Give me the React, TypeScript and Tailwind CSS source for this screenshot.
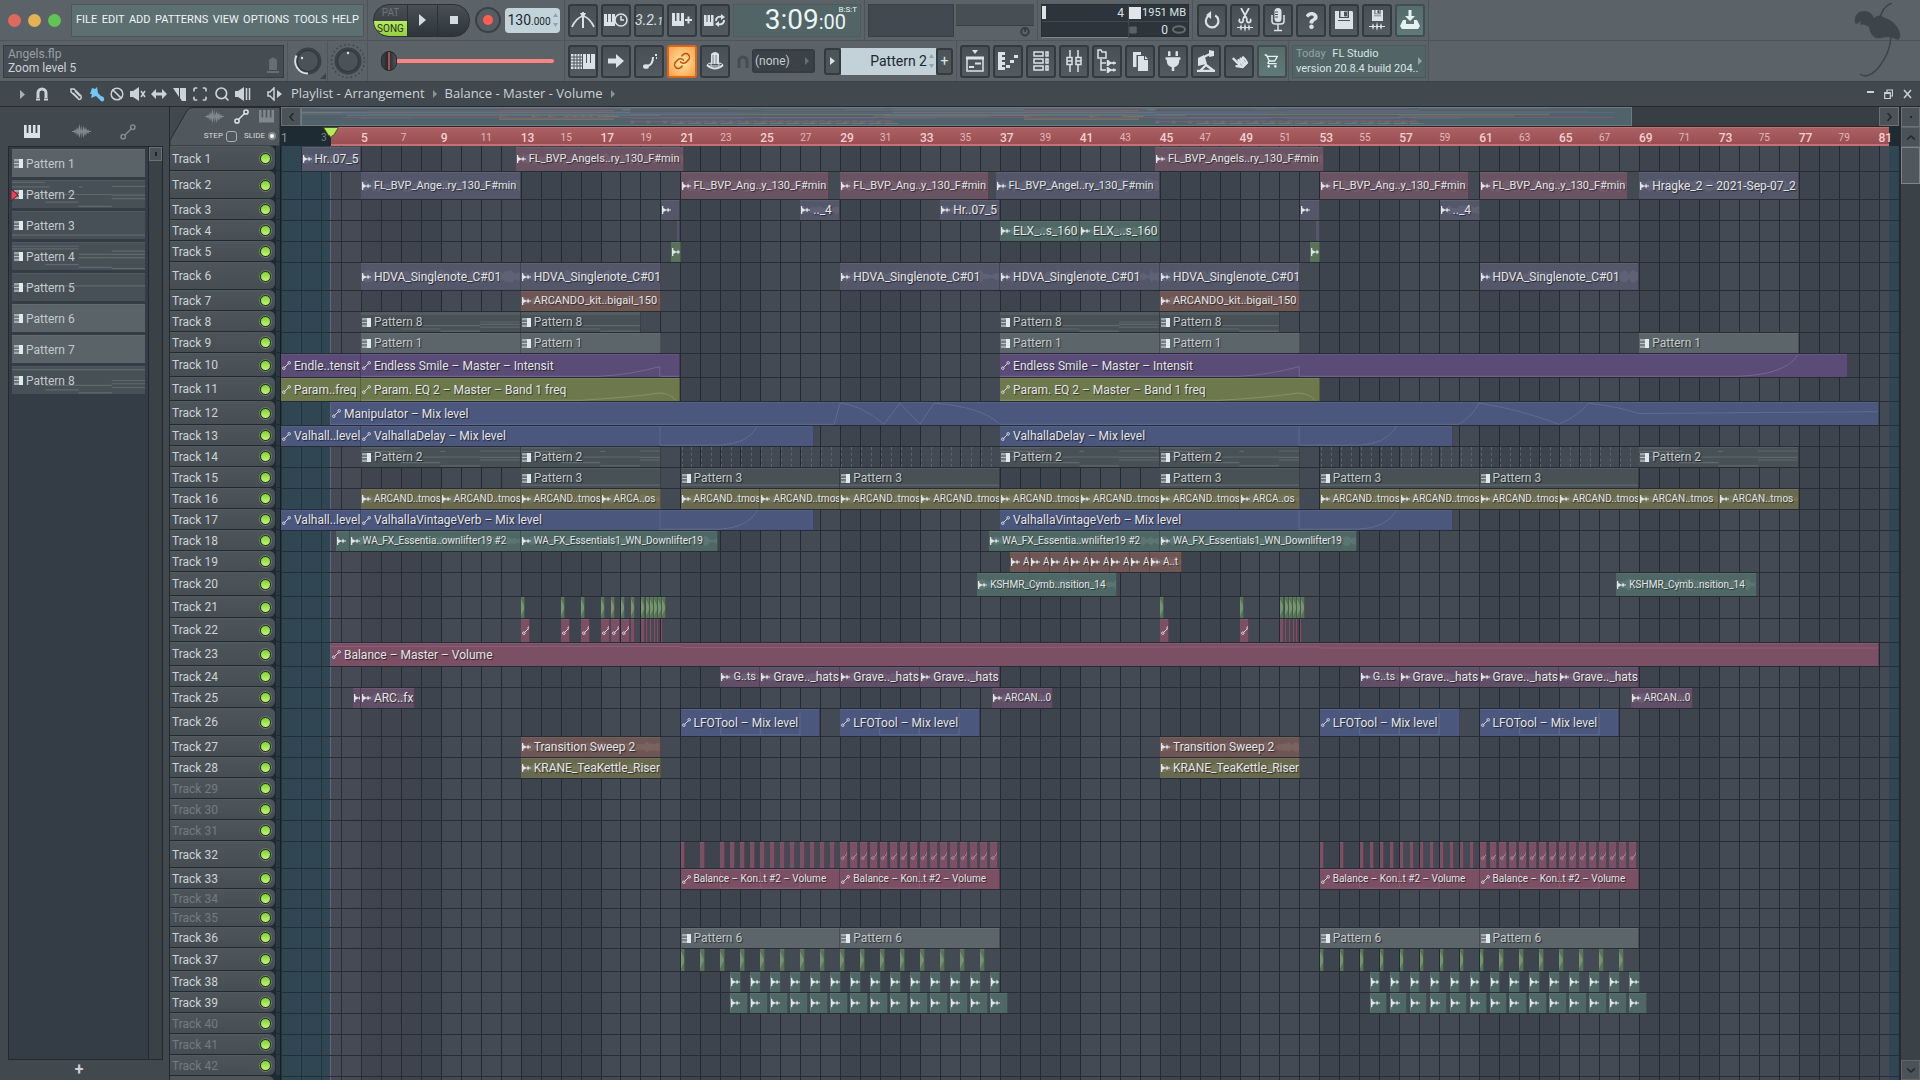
import React from 'react';
import { FaPlug, FaQuestion, FaHandPointer } from 'react-icons/fa';
import { MdOutlineShoppingCart } from 'react-icons/md';
import { Link, Ban, Search, Scan } from 'lucide-react';

type Kind = 'audio' | 'auto' | 'pattern' | 'tick' | 'hit';
type Size = 'sm' | 'xs';
type Tone = keyof typeof tones;

interface Clip {
  at: number;
  end: number;
  name?: string;
  tone: Tone;
  kind: Kind;
  size?: Size;
  curve?: string;
}

interface Track {
  h: number;
  clips: Clip[];
}

// Number of bars that fit in the arrangement view
const BARS = 81;

const tones = {
  slate: { bg: 'bg-[#54576a]', fill: '#6a6d80' },
  mauve: { bg: 'bg-[#6a5363]', fill: '#7c6673' },
  teal: { bg: 'bg-[#4f6866]', fill: '#68827f' },
  green: { bg: 'bg-[#577359]', fill: '#76946f' },
  brown: { bg: 'bg-[#6d5654]', fill: '#866f6c' },
  olive: { bg: 'bg-[#69694f]', fill: '#7f7f64' },
  violet: { bg: 'bg-[#604f66]', fill: '#79677f' },
  purple: { bg: 'bg-[#5a4c77]', fill: '#75678f' },
  lime: { bg: 'bg-[#6d794d]', fill: '#869163' },
  blue: { bg: 'bg-[#4c577d]', fill: '#616b8f' },
  pink: { bg: 'bg-[#7b4f64]', fill: '#8c6174' },
  patDark: { bg: 'bg-[#485156]', fill: '#5d666b' },
  patLight: { bg: 'bg-[#5c656a]', fill: '#5c656a' },
  ghost: { bg: 'bg-transparent', fill: '#5d666b' },
};

const audio = (at: number, end: number, tone: Tone, name?: string, size?: Size): Clip => ({ at, end, name, tone, kind: 'audio', size });
const auto = (at: number, end: number, tone: Tone, name?: string, curve?: string): Clip => ({ at, end, name, tone, kind: 'auto', curve });
const pattern = (at: number, end: number, n: number): Clip => ({
  at,
  end,
  name: `Pattern ${n}`,
  tone: n === 1 || n === 6 ? 'patLight' : 'patDark',
  kind: 'pattern',
});
const hits = (starts: number[], len: number, tone: Tone, kind: Kind): Clip[] => starts.map((s) => ({ at: s, end: s + len, tone, kind }));
const range = (from: number, to: number, step: number) => {
  const out: number[] = [];
  for (let n = from; n <= to + 0.001; n += step) out.push(n);
  return out;
};
// The drop comes back 32 bars later
const twice = (clips: Clip[]): Clip[] => [...clips, ...clips.map((c) => ({ ...c, at: c.at + 32, end: c.end + 32 }))];

const delayCurve = 'M15 0.02 V0.96 H18 Q19.4 0.9 19.9 0.02';
const squares = 'M2 0.96 V0.15 M2 0.96 H4 V0.15 M4 0.96 H6 V0.15';

const tracks: Track[] = [
  { h: 25, clips: [audio(2.03, 5, 'slate', 'Hr..07_5'), ...twice([audio(12.75, 21.2, 'mauve', 'FL_BVP_Angels..ry_130_F#min', 'sm')])] },
  {
    h: 28,
    clips: [
      audio(5, 13, 'slate', 'FL_BVP_Ange..ry_130_F#min', 'sm'),
      ...twice([audio(21, 28.45, 'mauve', 'FL_BVP_Ang..y_130_F#min', 'sm'), audio(29, 36.45, 'mauve', 'FL_BVP_Ang..y_130_F#min', 'sm')]),
      audio(36.77, 45, 'slate', 'FL_BVP_Angel..ry_130_F#min', 'sm'),
      audio(69, 77, 'slate', 'Hragke_2 – 2021-Sep-07_2'),
    ],
  },
  { h: 21, clips: [...twice([audio(20, 21, 'slate'), audio(27, 29, 'slate', '.._4')]), audio(34, 37, 'slate', 'Hr..07_5')] },
  {
    h: 21,
    clips: [...hits([20.8, 52.8], 0.2, 'slate', 'tick'), audio(37, 41, 'teal', 'ELX_..s_160'), audio(41, 45, 'teal', 'ELX_..s_160')],
  },
  { h: 21, clips: twice([audio(20.5, 21, 'green')]) },
  {
    h: 28,
    clips: [
      ...twice([audio(5, 13, 'slate', 'HDVA_Singlenote_C#01'), audio(29, 37, 'slate', 'HDVA_Singlenote_C#01')]),
      ...twice([audio(13, 20, 'slate', 'HDVA_Singlenote_C#01')]),
    ],
  },
  { h: 21, clips: twice([audio(13, 20, 'brown', 'ARCANDO_kit..bigail_150', 'sm')]) },
  { h: 21, clips: twice([pattern(5, 13, 8), pattern(13, 19, 8)]) },
  { h: 21, clips: [...twice([pattern(5, 13, 1), pattern(13, 20, 1)]), pattern(69, 77, 1)] },
  {
    h: 24,
    clips: [
      auto(1, 5, 'purple', 'Endle..tensit'),
      auto(5, 21, 'purple', 'Endless Smile – Master – Intensit', 'M0 0.97 H12 Q13.5 0.9 15 0.55 V0.97 H16'),
      auto(37, 79.45, 'purple', 'Endless Smile – Master – Intensit', 'M0 0.97 H12 Q13.5 0.9 15 0.55 V0.97 H37 Q39.4 0.9 40 0.02'),
    ],
  },
  {
    h: 24,
    clips: [
      auto(1, 5, 'lime', 'Param..freq'),
      ...twice([auto(5, 21, 'lime', 'Param. EQ 2 – Master – Band 1 freq', 'M0 0.97 H11 Q13.5 0.85 15 0.65 Q15.6 0.7 15.8 0.97')]),
    ],
  },
  {
    h: 24,
    clips: [
      auto(
        3.5,
        81,
        'blue',
        'Manipulator – Mix level',
        'M0 0.97 H25.2 L25.5 0.05 Q26.5 0.1 27.700 0.97 L28.5 0.05 L29.5 0.97 L30.2 0.05 Q32.6 0.2 33.5 0.97 H56.5 Q57.2 0.6 57.5 0.05 Q59.5 0.3 61.5 0.97 Q62.5 0.6 63 0.05 Q64.5 0.2 65.5 0.5 L77.5 0.42',
      ),
    ],
  },
  { h: 21, clips: [auto(1, 5, 'blue', 'Valhall..level'), ...twice([auto(5, 27.67, 'blue', 'ValhallaDelay – Mix level', delayCurve)])] },
  {
    h: 21,
    clips: [...twice([pattern(5, 13, 2), pattern(13, 20, 2), ...hits(range(21, 36.5, 0.5), 0.5, 'ghost', 'tick')]), pattern(69, 77, 2)],
  },
  { h: 21, clips: twice([pattern(13, 20, 3), pattern(21, 29, 3), pattern(29, 37, 3)]) },
  {
    h: 21,
    clips: [
      ...twice([
        ...[5, 9, 13, 21, 25, 29, 33].map((b) => audio(b, b + 4, 'olive', 'ARCAND..tmos', 'xs')),
        audio(17, 20, 'olive', 'ARCA..os', 'xs'),
      ]),
      ...[69, 73].map((b) => audio(b, b + 4, 'olive', 'ARCAN..tmos', 'xs')),
    ],
  },
  { h: 21, clips: [auto(1, 5, 'blue', 'Valhall..level'), ...twice([auto(5, 27.67, 'blue', 'ValhallaVintageVerb – Mix level', delayCurve)])] },
  {
    h: 21,
    clips: [
      audio(3.73, 4.43, 'teal'),
      audio(4.43, 13, 'teal', 'WA_FX_Essentia..ownlifter19 #2', 'xs'),
      audio(36.45, 45, 'teal', 'WA_FX_Essentia..wnlifter19 #2', 'xs'),
      ...twice([audio(13, 22.87, 'teal', 'WA_FX_Essentials1_WN_Downlifter19', 'xs')]),
    ],
  },
  { h: 21, clips: [...range(37.5, 43.5, 1).map((b) => audio(b, b + 1, 'brown', 'A', 'xs')), audio(44.5, 46.1, 'brown', 'A..t', 'xs')] },
  { h: 24, clips: twice([audio(35.85, 42.87, 'teal', 'KSHMR_Cymb..nsition_14', 'xs')]) },
  {
    h: 22,
    clips: hits([13, 15, 16, 17, 17.5, 18, 18.5, 19, 19.25, 19.45, 19.65, 19.85, 20.05, 45, 49, 51, 51.25, 51.45, 51.65, 51.85, 52.05], 0.2, 'green', 'tick'),
  },
  {
    h: 24,
    clips: [
      ...[13, 15, 16, 17, 17.5, 18, 45, 49].map((b) => auto(b, b + 0.48, 'pink')),
      ...hits([18.5, 19, 51], 0.22, 'pink', 'tick'),
      ...hits([19.27, 19.45, 19.65, 19.82, 20.02, 51.27, 51.45, 51.65, 51.82, 52.02], 0.1, 'pink', 'tick'),
    ],
  },
  { h: 24, clips: [auto(3.5, 81, 'pink', 'Balance – Master – Volume', 'M0 0.15 H17.5 L17.6 0.2 L49.5 0.17 L49.6 0.22 H77.5')] },
  {
    h: 21,
    clips: twice([audio(23, 25, 'violet', 'G..ts', 'sm'), ...[25, 29, 33].map((b) => audio(b, b + 4, 'violet', 'Grave.._hats'))]),
  },
  { h: 21, clips: [audio(4.6, 5, 'violet'), audio(5, 7.7, 'violet', 'ARC..fx'), ...twice([audio(36.58, 39.67, 'violet', 'ARCAN...0', 'xs')])] },
  { h: 28, clips: twice([21, 29].map((b) => auto(b, b + 7, 'blue', 'LFOTool – Mix level', squares))) },
  { h: 21, clips: twice([audio(13, 20, 'brown', 'Transition Sweep 2')]) },
  { h: 21, clips: twice([audio(13, 20, 'olive', 'KRANE_TeaKettle_Riser')]) },
  { h: 21, clips: [] },
  { h: 21, clips: [] },
  { h: 21, clips: [] },
  {
    h: 27,
    clips: twice([...hits([21, 22, ...range(23, 28.5, 0.5)], 0.24, 'pink', 'tick'), ...range(29, 36.5, 0.5).map((b) => auto(b, b + 0.38, 'pink'))]),
  },
  { h: 21, clips: twice([21, 29].map((b) => ({ ...auto(b, b + 8, 'pink', 'Balance – Kon..t #2 – Volume', squares), size: 'xs' as Size }))) },
  { h: 19, clips: [] },
  { h: 19, clips: [] },
  { h: 21, clips: twice([pattern(21, 29, 6), pattern(29, 37, 6)]) },
  { h: 23, clips: twice(hits(range(21, 36, 1), 0.22, 'green', 'tick')) },
  { h: 21, clips: twice(hits(range(23.5, 36.5, 1), 0.52, 'teal', 'hit')) },
  { h: 21, clips: twice(hits(range(23.5, 36.5, 1), 0.88, 'teal', 'hit')) },
  { h: 21, clips: [] },
  { h: 21, clips: [] },
  { h: 21, clips: [] },
];

// Note lines of the patterns: from, to, height (all as a share of the pattern)
const notes: Record<string, number[][]> = {
  'Pattern 2': [[0, 0.25, 0.05], [0, 0.28, 0.22], [0.5, 0.53, 0.22], [0, 0.75, 0.5], [0.25, 0.5, 0.78], [0.5, 0.75, 0.94], [0.75, 1, 0.2], [0.75, 1, 0.52], [0.75, 1, 0.65]],
  'Pattern 3': [[0, 1, 0.86]],
  'Pattern 4': [[0, 0.5, 0.12], [0, 0.5, 0.22], [0.5, 0.75, 0.42], [0.5, 0.75, 0.54], [0.25, 0.5, 0.8], [0.5, 0.75, 0.9], [0.75, 1, 0.3], [0.75, 1, 0.42], [0.75, 1, 0.54], [0.75, 1, 0.95]],
  'Pattern 5': [[0, 1, 0.44]],
  'Pattern 8': [[0, 1, 0.1], [0.25, 0.5, 0.85], [0.25, 0.75, 0.68], [0.5, 0.75, 0.96], [0.75, 1, 0.5], [0.75, 1, 0.62], [0.75, 1, 0.76]],
};

const NoteLines = ({ name, bars }: { name: string; bars: number }) => (
  <svg className="absolute inset-0 h-full w-full" viewBox={`0 0 ${bars} 1`} preserveAspectRatio="none">
    {(notes[name] || []).map(([a, b, y], i) => (
      <path key={i} d={`M${a * 8} ${y}H${b * 8}`} stroke="#5f686d" strokeWidth="1.2" vectorEffect="non-scaling-stroke" />
    ))}
  </svg>
);

const wave = (seed: number, n: number) => {
  let top = 'M0 10';
  let low = '';
  for (let i = 0; i <= n; i++) {
    const r = Math.abs(Math.sin(seed * 12.9 + i * 78.233) * 43758.5453) % 1;
    const amp = 1 + r * 4;
    top += `L${i} ${(10 - amp).toFixed(1)}`;
    low = `L${i} ${(10 + amp).toFixed(1)}` + low;
  }
  return top + low + 'Z';
};

const AudioGlyph = () => (
  <svg className="w-[9px] shrink-0" viewBox="0 0 9 8" fill="currentColor">
    <path d="M0 0h1.300v2L4 3.500h1.200L6 1.500L7 3.400H9v1.200H7L6 6.500L5.200 4.500H4L1.300 6v2H0z" />
  </svg>
);

const AutoGlyph = ({ className = 'w-[9px]' }: { className?: string }) => (
  <svg className={`${className} shrink-0`} viewBox="0 0 10 10" fill="none" stroke="currentColor">
    <circle cx="2" cy="8" r="1.400" />
    <circle cx="8" cy="2" r="1.400" />
    <path d="M3 7L7 3" />
  </svg>
);

const PatternGlyph = () => (
  <svg className="w-[9px] shrink-0" viewBox="0 0 9 9">
    <path d="M0 1h5M0 4.500h5M0 8h5" stroke="#b9c2c6" strokeWidth="1.4" />
    <path d="M0 2.700h5M0 6.300h5" stroke="#7d868b" />
    <path d="M5 0h4v9H5z" fill="#e3eaec" />
  </svg>
);

const labelSize = { sm: 'text-[11px]', xs: 'text-[10px]' };

const ClipView = ({ clip, seed }: { clip: Clip; seed: number }) => {
  const bars = clip.end - clip.at;
  const tone = tones[clip.tone];
  return (
    <div
      className={`absolute inset-y-0 flex items-center gap-[3px] overflow-hidden pl-px text-[#e2e5e8] ${tone.bg} ${clip.tone === 'ghost' ? '' : 'border-r border-black/20 shadow-[inset_0_1px_0_rgba(255,255,255,0.06)]'}`}
      style={{ left: `${((clip.at - 1) / BARS) * 100}%`, width: `${(bars / BARS) * 100}%` }}
    >
      {clip.kind === 'audio' && bars > 1 && (
        <svg className="absolute inset-0 h-full w-full opacity-50" viewBox={`0 0 ${Math.round(bars * 8)} 20`} preserveAspectRatio="none">
          <path d={wave(seed, Math.round(bars * 8))} fill={tone.fill} />
        </svg>
      )}
      {clip.kind === 'pattern' && <NoteLines name={clip.name || ''} bars={bars} />}
      {clip.curve && (
        <svg className="absolute inset-0 h-full w-full" viewBox={`0 0 ${bars} 1`} preserveAspectRatio="none" fill="none" stroke={tone.fill}>
          <path d={clip.curve} vectorEffect="non-scaling-stroke" />
        </svg>
      )}
      {clip.tone === 'ghost' && <span className="h-full border-l border-dashed border-[#5c6568]" />}
      {((clip.kind === 'tick' && clip.tone === 'green') || clip.kind === 'hit') && (
        <svg className="absolute inset-y-0 left-0 h-full w-1" viewBox="0 0 4 20" preserveAspectRatio="none">
          <path d="M0 2L4 10L0 18Z" fill={tone.fill} />
        </svg>
      )}
      {(clip.kind === 'audio' || clip.kind === 'hit') && <span className="relative flex"><AudioGlyph /></span>}
      {clip.kind === 'auto' && <span className={`relative flex ${bars < 0.4 ? 'opacity-50' : ''}`}><AutoGlyph /></span>}
      {clip.kind === 'pattern' && <span className="relative flex"><PatternGlyph /></span>}
      {clip.name && (
        <span
          className={`relative leading-4 whitespace-nowrap [text-shadow:1px_1px_1px_rgba(0,0,0,0.6)] ${clip.kind === 'pattern' ? 'text-[#c3cace]' : ''} ${clip.size ? labelSize[clip.size] : 'text-xs'}`}
        >
          {clip.name}
        </span>
      )}
    </div>
  );
};

/* ---------- toolbar ---------- */

const Keys = ({ className = 'w-[18px]' }: { className?: string }) => (
  <svg className={className} viewBox="0 0 18 15" fill="currentColor">
    <path d="M0 0h3v9h2V0h3v9h2V0h3v9h2V0h3v15H0z" />
  </svg>
);

const WaveIcon = () => (
  <svg className="w-[19px]" viewBox="0 0 19 15" fill="currentColor">
    <path d="M0 7h2l1-2 1 2 1-4 1 3 1.500-6L9 7l.5-7 .5 7 1.500-5L13 6l1-3 1 4 1-2 1 2h2v1h-2l-1 2-1-2-1 4-1-3-1.500 5L10 8l-.5 7L9 8l-1.500 6L6 9l-1 3-1-4-1 2-1-2H0z" />
  </svg>
);

const ToolButton = ({ label, tone = 'dark', children }: { label: string; tone?: 'dark' | 'hot' | 'teal'; children: React.ReactNode }) => {
  const look = {
    dark: 'border-[#343b40] bg-linear-to-b from-[#485055] to-[#535b60] text-[#dbe3e6]',
    hot: 'border-[#d9671d] bg-[radial-gradient(#ffe9a8,#ff9e45)] text-[#c4530f]',
    teal: 'border-[#3d504f] bg-linear-to-b from-[#566c6a] to-[#62797a] text-[#e6f2f2]',
  }[tone];
  return (
    <button aria-label={label} className={`flex h-[33px] w-[30px] shrink-0 items-center justify-center rounded-[3px] border-2 ${look}`}>
      {children}
    </button>
  );
};

const Section = ({ className, children }: { className: string; children?: React.ReactNode }) => (
  <div className={`flex h-full shrink-0 items-center border-r border-[#4e555b] ${className}`}>{children}</div>
);

const Ic = ({ d, fill, w = 'w-5', box = '0 0 20 20', sw = 1.5 }: { d?: string; fill?: string; w?: string; box?: string; sw?: number }) => (
  <svg className={`${w} shrink-0`} viewBox={box}>
    {d && <path d={d} fill="none" stroke="currentColor" strokeWidth={sw} />}
    {fill && <path d={fill} fill="currentColor" />}
  </svg>
);

const FloppyIcon = ({ className }: { className: string }) => (
  <svg className={className} viewBox="0 0 18 18">
    <path d="M0 0h4v7h10V0h3l1 1v17H0z" fill="currentColor" />
    <path d="M5.500 0h7v6h-7z" fill="currentColor" />
    <path d="M9.500 1h2v4h-2zM3 9.500h12" fill="#4d5559" stroke="#4d5559" />
  </svg>
);

const Spinner = () => (
  <svg className="w-[5px] shrink-0" viewBox="0 0 5 14" fill="#93a3aa"><path d="M0 4L2.500 0L5 4zM0 10L2.500 14L5 10z" /></svg>
);

const TopRow = () => (
  <div className="flex h-[41px] items-center border-b border-[#4e555b]">
    <Section className="w-[368px] pr-[3px] pl-2">
      <div className="flex gap-[7px]">
        <button aria-label="Close" className="size-[13px] rounded-full bg-[#e0695f]" />
        <button aria-label="Minimize" className="size-[13px] rounded-full bg-[#e5b252]" />
        <button aria-label="Maximize" className="size-[13px] rounded-full bg-[#62c454]" />
      </div>
      <nav className="ml-[10px] flex h-[33px] flex-1 items-center justify-between border border-[#49595b] bg-[#5d6f71] px-1 text-[11px] text-[#eef5f5]">
        {['FILE', 'EDIT', 'ADD', 'PATTERNS', 'VIEW', 'OPTIONS', 'TOOLS', 'HELP'].map((m) => (
          <button key={m}>{m}</button>
        ))}
      </nav>
    </Section>
    <Section className="w-[197px] pl-[5px]">
      <div className="flex h-[33px] w-[97px] overflow-hidden rounded-2xl border border-[#2b3136] bg-linear-to-b from-[#485056] to-[#2e353a]">
        <div className="flex w-[33px] flex-col text-center text-[10px] leading-4">
          <button className="h-4 text-[#6d757a]">PAT</button>
          <button className="h-4 bg-linear-to-b from-[#b8ec62] to-[#93cc3e] text-[#24330f]">SONG</button>
        </div>
        <button aria-label="Play" className="flex w-[31px] items-center justify-center border-x border-[#2b3136] text-[#d5dcdf]">
          <svg className="w-[7px]" viewBox="0 0 7 12"><path d="M0 0L7 6L0 12z" fill="currentColor" /></svg>
        </button>
        <button aria-label="Stop" className="flex flex-1 items-center justify-center"><span className="size-2 bg-[#d5dcdf]" /></button>
      </div>
      <button aria-label="Record" className="ml-[5px] flex size-[26px] items-center justify-center rounded-full border-2 border-[#3a4146] bg-[#555c62]">
        <span className="size-[10px] rounded-full bg-[#ff5d52]" />
      </button>
      <div className="ml-1 flex h-[25px] w-[55px] items-center justify-center gap-[2px] rounded-sm bg-[#c3d3da] text-[#20282c]">
        <span className="text-sm">130<span className="text-[10px]">.000</span></span>
        <Spinner />
      </div>
    </Section>
    <Section className="w-[300px] gap-[3px] px-[3px]">
      <ToolButton label="Metronome"><Ic w="w-6" box="0 0 24 20" sw={1.8} d="M1 17Q5 8 12 6Q19 8 23 17M12 2V18" fill="M9 3h6l-3 6zM11 9h2v9h-2z" /></ToolButton>
      <ToolButton label="Wait for input">
        <svg className="w-6 shrink-0" viewBox="0 0 24 16"><path d="M0 2h3v8h1V2h3v8h1V2h3v12H0z" fill="currentColor" /><circle cx="17" cy="8" r="6" fill="#4d5559" stroke="currentColor" strokeWidth="1.5" /><path d="M17 4v4h3" fill="none" stroke="currentColor" strokeWidth="1.5" /></svg>
      </ToolButton>
      <ToolButton label="Countdown"><i className="text-sm">3.2.<span className="text-[10px]">1</span></i></ToolButton>
      <ToolButton label="Overdub"><Ic w="w-[20px]" box="0 0 20 14" fill="M0 0h3v8h1.500V0h3v8H9V0h3v13H0zM13 6h2.500V3.500h2V6H20v2h-2.500v2.500h-2V8H13z" /></ToolButton>
      <ToolButton label="Loop record">
        <svg className="w-[22px] shrink-0" viewBox="0 0 22 15"><path d="M0 2h2.500v7h1V2h2.500v7h1V2h2.500v11H0z" fill="currentColor" /><path d="M12 8a4 4 0 0 1 6.500-3.500M20 7a4 4 0 0 1-6.500 3.500" fill="none" stroke="currentColor" strokeWidth="1.800" /><path d="M17 1l4 3-4 3zM15 8v6l-4-3z" fill="currentColor" /></svg>
      </ToolButton>
      <div className="relative flex h-[33px] flex-1 items-center justify-end border border-[#4a5c5d] bg-[#526465] pr-[14px] text-[28px] text-[#e8f6f6]">
        <span>3:09<span className="text-xl">:00</span></span>
        <span className="absolute top-px right-[3px] text-[8px] leading-2">B:S:T</span>
      </div>
    </Section>
    <Section className="w-[173px] gap-[2px] px-[3px]">
      <div className="h-[33px] w-[86px] border border-[#3a4146] bg-[#424950]" />
      <div className="flex h-[33px] flex-1 flex-col">
        <div className="h-6 border-b border-[#3a4146] bg-[#474e54]" />
        <svg className="mt-px mr-1 w-[10px] self-end" viewBox="0 0 10 10"><circle cx="5" cy="5" r="4" fill="none" stroke="#363d42" strokeWidth="2" /><path d="M5 1v4" stroke="#363d42" strokeWidth="2" /></svg>
      </div>
    </Section>
    <Section className="w-[155px] px-[3px]">
      <div className="grid h-[33px] flex-1 grid-cols-[86px_1fr] border border-[#262d33] bg-[#2d343b] text-xs leading-4 text-[#dbe3e6]">
        <div className="flex items-center justify-between border-b border-[#414950]"><span className="h-[13px] w-1 bg-[#dbe3e6]" /><span className="pr-1">4</span></div>
        <div className="flex items-center justify-between border-b border-l border-[#414950] pr-[2px]"><span className="size-3 bg-[#dfe6e9]" /><span className="text-[11px] whitespace-nowrap">1951 MB</span></div>
        <div className="border-b border-[#7d868b]" />
        <div className="flex items-center justify-end gap-1 border-l border-[#414950] pr-[2px]">
          <svg className="mr-auto w-2" viewBox="0 0 8 8"><path d="M1 1h6v6H1zM0 2h8M0 4h8M0 6h8" fill="#5a6268" stroke="#5a6268" /></svg>
          <span>0</span>
          <svg className="w-[14px]" viewBox="0 0 14 9"><ellipse cx="7" cy="4.500" rx="6" ry="3.200" fill="none" stroke="#646c72" strokeWidth="2" /></svg>
        </div>
      </div>
    </Section>
    <Section className="w-[236px] gap-[3px] pl-1">
      <ToolButton label="Undo"><Ic w="w-[18px]" sw={2.4} d="M6 5.500A7 7 0 1 0 13.500 5" fill="M9 0v9L3.500 4.500z" /></ToolButton>
      <ToolButton label="Cut"><Ic w="w-4" box="0 0 16 24" sw={1.8} d="M4 0l6 11M12 0L6 11M5.500 11a2 2 0 1 1-2.500 0M10.500 11a2 2 0 1 0 2.500 0" fill="M0 19h3l1-3 1 3h2l1-4 1 4h2l1-3 1 3h3v1h-3l-1 3-1-3H9l-1 4-1-4H5l-1 3-1-3H0z" /></ToolButton>
      <ToolButton label="Record audio"><svg className="w-4" viewBox="0 0 16 24"><rect x="4.500" y="0" width="7" height="14" rx="3.500" fill="currentColor" /><path d="M2 7v6a3 3 0 0 0 3 3h6a3 3 0 0 0 3-3V7M8 16v6M4 22.500h8" fill="none" stroke="currentColor" strokeWidth="1.500" /><path d="M5 4h3M5 6.500h3M5 9h3" stroke="#4d5559" /></svg></ToolButton>
      <ToolButton label="Help"><FaQuestion size={17} /></ToolButton>
      <ToolButton label="Save"><FloppyIcon className="w-[18px]" /></ToolButton>
      <ToolButton label="Render">
        <span className="flex flex-col items-center gap-px">
          <FloppyIcon className="w-[11px]" />
          <Ic w="w-4" box="0 0 16 9" fill="M0 4h3l1-3 1 3h2l1-4 1 4h2l1-3 1 3h3v1h-3l-1 3-1-3H9l-1 4-1-4H5l-1 3-1-3H0z" />
        </span>
      </ToolButton>
      <ToolButton label="Download" tone="teal"><svg className="w-5" viewBox="0 0 20 20" fill="currentColor"><path d="M8.500 0h3v6H15l-5 5-5-5h3.500zM3 10h3v4h8v-4h3l3 6-2 3H2l-2-3z" /></svg></ToolButton>
    </Section>
  </div>
);

const Knob = ({ dotted }: { dotted?: boolean }) => (
  <svg className="w-9" viewBox="0 0 36 36" role="img">
    {dotted && <circle cx="18" cy="18" r="16.500" fill="none" stroke="#3c4348" strokeWidth="1.500" strokeDasharray="1.500 2.820" />}
    <circle cx="18" cy="18" r="13.500" fill="#3b4247" />
    {!dotted && <path d="M6.500 12.500A12.500 12.500 0 0 0 18 30.500" fill="none" stroke="#d3e0e4" strokeWidth="2" />}
    <circle cx="18" cy="18" r="10.500" fill="#4b5358" stroke="#2f363b" />
    <circle cx={dotted ? 18 : 12} cy={dotted ? 10 : 15} r="1.200" fill="#dbe3e6" />
    {!dotted && <path d="M36 30v6h-6z" fill="#3c4348" />}
  </svg>
);

const BottomRow = () => (
  <div className="flex h-[41px] items-center border-b border-[#3b4247]">
    <Section className="w-[288px] px-[3px]">
      <div className="flex h-[33px] flex-1 items-center justify-between border border-[#363d42] bg-[#454c52] px-1 text-xs">
        <div className="leading-[14px]">
          <p className="text-[#98a1a5]">Angels.flp</p>
          <p className="text-[#cbd3d6]">Zoom level 5</p>
        </div>
        <svg className="mb-[3px] w-3 self-end" viewBox="0 0 12 17" fill="#666e73"><path d="M2 3q4-5 8 0v10H2zM0 14h12v2H0z" /></svg>
      </div>
    </Section>
    <Section className="w-10 justify-center"><Knob /></Section>
    <Section className="w-10 justify-center"><Knob dotted /></Section>
    <Section className="w-[197px] pr-[10px] pl-[13px]">
      <input
        type="range"
        aria-label="Song position"
        defaultValue={0}
        className="h-1 w-full appearance-none rounded-sm bg-[#ff8383] [&::-webkit-slider-thumb]:h-5 [&::-webkit-slider-thumb]:w-4 [&::-webkit-slider-thumb]:appearance-none [&::-webkit-slider-thumb]:rounded-full [&::-webkit-slider-thumb]:border [&::-webkit-slider-thumb]:border-[#23292d] [&::-webkit-slider-thumb]:bg-[linear-gradient(90deg,#3c4348,#23292d_45%,#a8534c_45%,#a8534c_55%,#2a3034_55%,#4d5559)]"
      />
    </Section>
    <Section className="w-[392px] gap-[3px] pl-[3px]">
      <ToolButton label="Typing keyboard"><svg className="w-6 shrink-0" viewBox="0 0 24 15"><path d="M0 0h11v15H0z" fill="currentColor" /><path d="M3 0v15M6 0v15M9 0v15M0 3h11M0 6h11M0 9h11M0 12h11" stroke="#4d5559" /><path d="M12 0h3v9h1V0h3v9h1V0h4v15H12z" fill="currentColor" /></svg></ToolButton>
      <ToolButton label="Step"><Ic w="w-4" box="0 0 16 14" fill="M0 4.500h8V0l8 7-8 7V9.500H0z" /></ToolButton>
      <ToolButton label="Slide notes"><Ic w="w-5" d="M8 15Q14 14 14 6M16 4h2M17 7h1" fill="M4 15.500a3 2.300 0 1 1 6 0a3 2.300 0 1 1-6 0z" sw={2} /></ToolButton>
      <ToolButton label="Link" tone="hot"><Link size={18} /></ToolButton>
      <ToolButton label="Hints"><svg className="w-[18px]" viewBox="0 0 18 20"><path d="M5 3q4-4 8 0v10H5z" fill="currentColor" /><path d="M7 4v9M10 4v9" stroke="#7b8489" /><path d="M1 14q8 7 16 0" fill="none" stroke="currentColor" strokeWidth="2" /><path d="M1 14q1-2 4-2v3h8v-3q3 0 4 2" fill="none" stroke="currentColor" /></svg></ToolButton>
      <svg className="ml-1 w-3 shrink-0" viewBox="0 0 12 13"><path d="M2 13V6a4 4 0 0 1 8 0v7" fill="none" stroke="#454c52" strokeWidth="3" /></svg>
      <label className="relative flex h-6 w-[63px] shrink-0 items-center rounded-[3px] border-2 border-[#363d42] bg-[#3b4247] text-xs text-[#c3cace]">
        <select aria-label="Snap" className="h-full w-full appearance-none pl-px">
          <option>(none)</option>
        </select>
        <svg className="absolute right-1 w-1" viewBox="0 0 4 8"><path d="M0 0L4 4L0 8z" fill="#666e73" /></svg>
      </label>
      <div className="ml-[6px] flex h-[27px] items-stretch">
        <button aria-label="Pattern menu" className="flex w-[17px] items-center justify-center rounded-[3px] border-2 border-[#343b40] bg-[#4d5559]"><svg className="w-[5px]" viewBox="0 0 5 8"><path d="M0 0L5 4L0 8z" fill="#dbe3e6" /></svg></button>
        <button className="flex w-[95px] items-center justify-end gap-[2px] bg-[#c3d1d8] pr-[2px] text-sm text-[#20282c]">Pattern 2 <Spinner /></button>
        <button aria-label="Add pattern" className="flex w-[17px] items-center justify-center rounded-[3px] border-2 border-[#343b40] bg-[#4d5559] text-sm text-[#dbe3e6]">+</button>
      </div>
    </Section>
    <Section className="w-[332px] gap-[3px] pl-[3px]">
      <ToolButton label="Playlist"><svg className="w-[18px]" viewBox="0 0 18 22"><path d="M6 0h6L9 4z" fill="currentColor" /><path d="M1 8h16v13H1z" fill="none" stroke="currentColor" strokeWidth="1.500" /><path d="M0 6.500h18v3H0zM3 16h5v2H3zM9 12.500h6v2H9z" fill="currentColor" /></svg></ToolButton>
      <ToolButton label="Piano roll"><svg className="w-5" viewBox="0 0 20 18" fill="currentColor"><path d="M0 0h7v3H4v2h3v3H4v2h3v3H4v2h3v3H0zM8 13h4v3H8zM12 8h4v3h-4zM16 3h4v3h-4z" /></svg></ToolButton>
      <ToolButton label="Channel rack"><Ic w="w-4" box="0 0 16 20" d="M1 1h9v4H1zM1 8h9v4H1zM1 15h9v4H1zM13 1h2v4h-2zM13 8h2v4h-2zM13 15h2v4h-2z" /></ToolButton>
      <ToolButton label="Mixer"><Ic w="w-4" box="0 0 16 22" d="M4 0v7M4 15v7M12 0v7M12 15v7M1 7.500h5v7H1zM10 7.500h5v7h-5zM1 11h5M10 11h5" /></ToolButton>
      <ToolButton label="Browser"><Ic w="w-5" box="0 0 20 24" d="M1 1h3l1 2h4v6H1zM4 10v11h5M4 14h5M10.500 11v6M10.500 18v6M10 14h9M10 21h9" fill="M11 11l4 3-4 3zM11 18l4 3-4 3zM15 14l2-2 1 2-1 2zM15 21l2-2 1 2-1 2z" /></ToolButton>
      <ToolButton label="Plugin picker"><Ic w="w-[15px]" box="0 0 15 19" fill="M0 0h8v3H3.500v12H0zM5 4h6v4h4v11H5zM12 4l3 3h-3z" /></ToolButton>
      <ToolButton label="Plugins"><FaPlug size={20} /></ToolButton>
      <ToolButton label="Tempo tapper"><Ic w="w-5" box="0 0 20 22" sw={2.4} d="M5 9Q9 6 14 4M8 8l2 7-6 6M10 15l8 6M1 21h18" fill="M2 8l6-3 2 9-8 2zM13 0l5 1v5l-5 1z" /></ToolButton>
      <ToolButton label="Touch controller"><FaHandPointer size={15} className="-rotate-45" /></ToolButton>
      <ToolButton label="Shop" tone="teal"><MdOutlineShoppingCart size={16} /></ToolButton>
    </Section>
    <Section className="w-[140px] px-[3px]">
      <a href="#news" className="flex h-[33px] flex-1 items-center justify-between border border-[#475a5b] bg-[#526465] px-[3px] text-[11px] leading-[15px] whitespace-nowrap text-[#d9e6e6]">
        <span>
          <span className="mr-1 text-[#93a5a5]">Today</span> FL Studio
          <br />
          version 20.8.4 build 204..
        </span>
        <svg className="w-1" viewBox="0 0 4 8"><path d="M0 0L4 4L0 8z" fill="#93a5a5" /></svg>
      </a>
    </Section>
  </div>
);

const FruitLogo = () => (
  <svg className="absolute top-[3px] right-[18px] w-12" viewBox="0 0 48 74">
    <path d="M1 20Q-1 9 10 8Q17 8 20 15Q25 10 31 15Q42 18 46 30Q47 35 44 37Q36 32 27 35Q17 37 15 24Q10 20 6 22L7 18L3 21z" fill="#3d444a" />
    <path d="M26 15Q29 3 38 0M37 34Q36 50 25 64Q14 77 6 71" fill="none" stroke="#3d444a" strokeWidth="1.500" />
  </svg>
);

/* ---------- playlist window ---------- */

const Arrow = () => <svg className="mx-2 w-1" viewBox="0 0 4 8"><path d="M0 0L4 4L0 8z" fill="#8a9398" /></svg>;

const TitleBar = () => (
  <div className="flex h-[25px] items-center border-b border-[#23292e] bg-[#41484e] pr-2 pl-5 text-[#cbd3d6]">
    <button aria-label="Playlist menu"><svg className="w-[5px]" viewBox="0 0 5 9"><path d="M0 0L5 4.500L0 9z" fill="#a8b1b5" /></svg></button>
    <button aria-label="Snap to grid" className="ml-[10px]"><svg className="w-[14px]" viewBox="0 0 14 14"><path d="M3 11V6a4 4 0 0 1 8 0v5" fill="none" stroke="currentColor" strokeWidth="3" /><path d="M1 11.500h4v2H1zM9 11.500h4v2H9z" fill="currentColor" /></svg></button>
    <div className="ml-5 flex w-[182px] items-center justify-between">
      <button aria-label="Draw"><Ic w="w-[14px]" box="0 0 14 14" d="M2 5V2h3l7 7q1 3-2 3.500zM4 6l5 5M6 4l5 5" /></button>
      <button aria-label="Paint" className="text-[#74c7f2]"><svg className="w-4" viewBox="0 0 16 16" fill="currentColor"><path d="M1 8l2-6 3 1 2-2 1 6 3 3q4 1 3 4t-4 0l-4-4-5 2 1-4z" /></svg></button>
      <button aria-label="Delete"><Ban size={14} strokeWidth={2.5} /></button>
      <button aria-label="Mute"><Ic w="w-4" box="0 0 16 14" d="M11 4l4 6M15 4l-4 6" fill="M0 4h3l6-4v14l-6-4H0z" /></button>
      <button aria-label="Slip"><svg className="w-4" viewBox="0 0 16 10" fill="currentColor"><path d="M0 5l5-5v3.500h6V0l5 5-5 5V6.500H5V10z" /></svg></button>
      <button aria-label="Slice"><svg className="w-[14px]" viewBox="0 0 14 14" fill="currentColor"><path d="M0 1h6v9zM7 1h6v13H9L7 11z" /></svg></button>
      <button aria-label="Select"><Scan size={16} strokeWidth={2.5} /></button>
      <button aria-label="Zoom"><Search size={16} strokeWidth={2.5} /></button>
      <button aria-label="Playback"><Ic w="w-4" box="0 0 16 14" d="M11.500 1v12M14.500 1v12" fill="M0 4h3l6-4v14l-6-4H0z" /></button>
    </div>
    <svg className="mr-[9px] ml-4 w-[15px]" viewBox="0 0 15 14"><path d="M1 5h2l4-4v12L3 9H1z" fill="none" stroke="#cbd3d6" strokeWidth="1.500" /><path d="M10 3l5 4-5 4z" fill="#cbd3d6" /></svg>
    <h1 className="flex items-center font-['Open_Sans',sans-serif] text-[13px]">
      Playlist - Arrangement <Arrow /> Balance - Master - Volume <Arrow />
    </h1>
    <div className="ml-auto flex items-center gap-[10px]">
      <button aria-label="Minimize window"><svg className="w-[7px]" viewBox="0 0 7 8"><path d="M0 1h7v2H0z" fill="currentColor" /></svg></button>
      <button aria-label="Restore window"><Ic w="w-[9px]" box="0 0 9 10" d="M3 3V1h5.500v6H7M.7 3.500h5.600v6H.7zM.7 4.500h5.600" sw={1.2} /></button>
      <button aria-label="Close window"><Ic w="w-[9px]" box="0 0 9 10" d="M1 1l7 8M8 1L1 9" /></button>
    </div>
  </div>
);

const PatternPicker = () => (
  <aside className="flex w-[170px] shrink-0 flex-col border-r border-[#23292e] bg-[#41484e] pl-2">
    <div className="flex h-[39px] items-center gap-7 pt-[10px] pl-4 text-[#7f898e]">
      <button aria-label="Patterns" className="w-5 text-[#dbe3e6]"><Keys className="w-4" /></button>
      <button aria-label="Audio clips" className="w-5"><WaveIcon /></button>
      <button aria-label="Automation clips" className="w-5"><AutoGlyph className="w-4" /></button>
    </div>
    <div className="mr-[6px] flex flex-1 border border-[#23292e] bg-[#343d46]">
      <ul className="flex flex-1 flex-col gap-[3px] px-[3px] pt-[2px]">
        {range(1, 8, 1).map((n) => (
          <li key={n} className={`relative h-7 border-t border-white/5 ${[1, 6, 7].includes(n) ? 'bg-[#5a6368]' : 'bg-[#475056]'}`}>
            <NoteLines name={`Pattern ${n}`} bars={8} />
            <button className="relative flex h-full w-full items-center gap-[3px] pl-[2px] text-xs leading-4 text-[#c3cace]">
              <PatternGlyph />
              <span>Pattern {n}</span>
            </button>
            {n === 2 && <svg className="absolute top-2 -left-px w-[7px]" viewBox="0 0 7 12"><path d="M0 0L7 6L0 12z" fill="#ef3f5b" stroke="#4a1f2a" /></svg>}
          </li>
        ))}
      </ul>
      <div className="w-[14px] border-l border-[#23292e] bg-[#3a4147]">
        <div className="flex h-[14px] items-center justify-center border border-[#6a7277] bg-[#4b5358]"><span className="h-1 w-[2px] bg-[#1f262b]" /></div>
      </div>
    </div>
    <button aria-label="Add" className="h-5 w-[142px] text-center text-base leading-5 font-bold text-[#cbd3d6]">+</button>
  </aside>
);

const TrackTabs = () => (
  <div className="relative flex h-[39px] w-[111px] shrink-0 flex-col border-r border-[#23292e] text-[#7f898e]">
    <svg className="absolute inset-0 h-full w-full" viewBox="0 0 111 40" preserveAspectRatio="none"><path d="M0 40V34L17 4Q19 .5 23 .5H111V40z" fill="#50585d" stroke="#262d32" /></svg>
    <div className="relative flex h-[19px] items-center justify-end gap-[10px] pr-[6px]">
      <WaveIcon />
      <AutoGlyph className="w-[15px] text-[#dbe3e6]" />
      <Keys className="w-[15px]" />
    </div>
    <div className="relative flex items-center justify-end gap-[3px] pr-1 text-[8px] leading-5 text-[#d3dade]">
      <label htmlFor="step">STEP</label>
      <input id="step" type="checkbox" className="mr-1 size-[11px] appearance-none rounded-[3px] border border-[#a8b1b5]" />
      <label htmlFor="slide">SLIDE</label>
      <input id="slide" type="radio" defaultChecked className="size-2 appearance-none rounded-full border-2 border-[#7f898e] bg-white" />
    </div>
  </div>
);

const MiniMap = () => (
  <div className="flex h-5 border-b border-[#23292e] bg-[#373e44]">
    <button aria-label="Scroll left" className="flex w-5 items-center justify-center border border-[#6a7277] bg-[#4b5358] text-[#20282c]"><Ic w="w-[5px]" box="0 0 5 8" d="M4.500 0L1 4L4.500 8" /></button>
    <div className="grid flex-1 grid-cols-[27fr_5fr]">
      <div className="border border-[#6b7c80] bg-[#52626a]">
        <svg className="block h-[17px] w-full" viewBox="0 0 81 42" preserveAspectRatio="none">
          {tracks.map((t, i) =>
            t.clips.map((c, j) => c.tone !== 'ghost' && <rect key={`${i}-${j}`} x={c.at - 1} y={i} width={c.end - c.at} height="1.6" fill={tones[c.tone].fill} />),
          )}
        </svg>
      </div>
    </div>
    <button aria-label="Scroll right" className="flex w-5 items-center justify-center border border-[#6a7277] bg-[#4b5358] text-[#20282c]"><Ic w="w-[5px]" box="0 0 5 8" d="M.5 0L4 4L.5 8" /></button>
  </div>
);

const Ruler = () => (
  <div className="relative flex h-[19px] items-end bg-[#1f2b33]">
    <div className="absolute inset-y-0 border-t border-b-2 border-[#c07274] bg-linear-to-b from-[#ab6063] to-[#994e52]" style={{ left: `${(2.5 / BARS) * 100}%`, width: `${(78 / BARS) * 100}%` }} />
    {range(1, BARS, 1).map((b) => (
      <span key={b} className={`relative h-4 w-0 flex-1 leading-4 ${b % 4 === 1 ? 'text-xs' : 'text-[10px] opacity-80'} ${b < 4 ? 'text-[#8a969c]' : 'text-[#f6cfcf]'} ${b % 4 === 1 && b > 4 ? 'font-medium' : ''}`}>
        {b % 2 === 1 && b}
      </span>
    ))}
    <svg className="absolute top-0 w-[15px] -translate-x-1/2" viewBox="0 0 15 11" style={{ left: `${(2.5 / BARS) * 100}%` }}><path d="M0 .5H15L10 8.500H9L7.500 11L6 8.500H5z" fill="#b4ea5e" stroke="#3f5a1c" /></svg>
  </div>
);

const Lanes = () => (
  <div className="relative flex-1 overflow-hidden bg-[#3d444e]">
    <div className="absolute inset-0 flex">
      {range(1, BARS, 1).map((b) => (
        <div key={b} className={`flex-1 border-l border-[#222932] ${Math.floor((b - 1) / 4) % 2 === 0 ? 'bg-[#434a54]' : ''}`} />
      ))}
    </div>
    <div className="absolute inset-y-0 w-40 bg-linear-to-r from-[#5a4a5a]/10 to-transparent" style={{ left: `${(2.5 / BARS) * 100}%` }} />
    <div className="absolute inset-y-0 left-0 border-r border-[#5d6c74] bg-[#1b4350]/45" style={{ width: `${(2.5 / BARS) * 100}%` }} />
    <div className="absolute inset-y-0 right-0 bg-[#1b4350]/45" style={{ width: `${(0.5 / BARS) * 100}%` }} />
    <div className="relative pt-px">
      {tracks.map((t, i) => (
        <div key={i} className="relative border-b border-[#262d37]" style={{ height: t.h }}>
          <div className="absolute inset-0">
            {t.clips.map((c, j) => (
              <ClipView key={j} clip={c} seed={i * 7 + j} />
            ))}
          </div>
        </div>
      ))}
    </div>
  </div>
);

const TrackHeads = () => (
  <div className="w-[111px] shrink-0 overflow-hidden border-r border-[#171e24] bg-[#1f2b33]">
    {tracks.map((t, i) => (
      <div key={i} className="flex items-stretch pb-px" style={{ height: t.h }}>
        <div className="flex flex-1 items-center justify-between rounded-r-md border-t border-[#525a5f] bg-linear-to-b from-[#4d555a] to-[#464e53] pr-1 pl-[2px]">
          <label htmlFor={`track-${i}`} className={`text-xs whitespace-nowrap ${t.clips.length ? 'text-[#cbd3d6]' : 'text-[#737c81]'}`}>
            Track {i + 1}
          </label>
          <input
            id={`track-${i}`}
            type="checkbox"
            defaultChecked
            className="size-[11px] shrink-0 appearance-none rounded-full border border-[#26331a] bg-linear-to-b from-[#7fd22f] to-[#c4f57a] shadow-[0_0_0_1px_#6a7c66]"
          />
        </div>
        <div className="ml-px w-1 bg-[#2b3840]" />
      </div>
    ))}
    <div className="mr-[6px] h-5 rounded-tr-md bg-[#4d555a]" />
  </div>
);

export default function App() {
  return (
    <div className="flex h-screen flex-col overflow-hidden bg-[#41484e] font-['Roboto',sans-serif]">
      <header className="relative bg-[#5b6268]">
        <TopRow />
        <BottomRow />
        <FruitLogo />
      </header>
      <TitleBar />
      <main className="flex min-h-0 flex-1">
        <PatternPicker />
        <div className="flex min-w-0 flex-1 flex-col">
          <div className="flex">
            <TrackTabs />
            <div className="min-w-0 flex-1">
              <MiniMap />
              <Ruler />
            </div>
          </div>
          <div className="flex min-h-0 flex-1">
            <TrackHeads />
            <Lanes />
          </div>
        </div>
        <div className="flex w-[21px] shrink-0 flex-col border-l-2 border-[#23292e] bg-[#3a4147] text-[#20282c]">
          <button aria-label="Playlist options" className="flex h-5 items-center justify-center border border-[#6a7277] bg-[#4b5358]"><span className="size-[2px] bg-[#20282c]" /></button>
          <button aria-label="Scroll up" className="flex h-5 items-center justify-center border border-[#5f676c] bg-[#4b5358]"><Ic w="w-2" box="0 0 8 5" d="M0 4.500L4 1L8 4.500" /></button>
          <div className="h-[37px] border border-[#7d868b] bg-[#50585d]" />
          <button aria-label="Scroll down" className="mt-auto flex h-5 items-center justify-center border border-[#5f676c] bg-[#4b5358]"><Ic w="w-2" box="0 0 8 5" d="M0 .5L4 4L8 .5" /></button>
        </div>
      </main>
    </div>
  );
}
